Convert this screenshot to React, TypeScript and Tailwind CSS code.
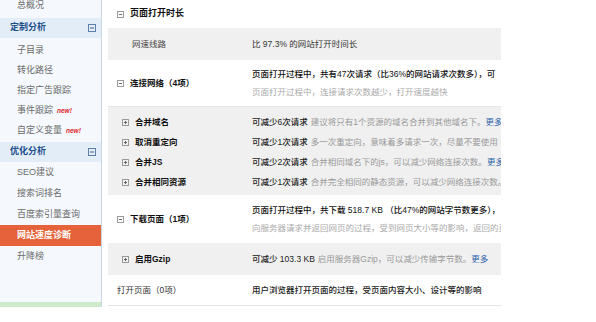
import React from 'react';

const FONT = "font-['Liberation_Sans','Noto_Sans_CJK_SC',sans-serif]";

function Toggle({ open, className = '' }: { open: boolean; className?: string }) {
  return (
    <svg width="7" height="7" viewBox="0 0 7 7" className={`shrink-0 ${className}`}>
      <rect x="0.5" y="0.5" width="6" height="6" fill="none" stroke="#9a9a9a" />
      <line x1="2" y1="3.5" x2="5" y2="3.5" stroke="#666" />
      {!open && <line x1="3.5" y1="2" x2="3.5" y2="5" stroke="#666" />}
    </svg>
  );
}

function SideHeader({ label }: { label: string }) {
  return (
    <div className="h-[20px] bg-[#e3edf8] flex items-center justify-between pl-[10px] pr-[5px]">
      <span className="text-[9px] font-bold text-[#1c4f8c]">{label}</span>
      <svg width="8" height="8" viewBox="0 0 8 8">
        <rect x="0.5" y="0.5" width="7" height="7" fill="none" stroke="#5d7ea6" />
        <line x1="2" y1="4" x2="6" y2="4" stroke="#3c5f8a" />
      </svg>
    </div>
  );
}

function SideItem({ label, isNew, active, h = 'h-[20px]' }: { label: string; isNew?: boolean; active?: boolean; h?: string }) {
  return (
    <div
      className={`${h} flex items-center pl-[17px] text-[9px] ${
        active ? 'bg-[#e5623b] text-white font-bold' : 'text-[#6b6b6b]'
      }`}
    >
      {label}
      {isNew && <span className="ml-[4px] text-[6.5px] italic font-bold text-[#e0262a]">new!</span>}
    </div>
  );
}

function Sidebar() {
  return (
    <aside className="w-[102px] shrink-0 h-[307px] bg-[#f5f9fd] border-r border-[#c9d7e5] flex flex-col overflow-hidden">
      {/* scrolled list: first item half hidden */}
      <div className="h-[18px] overflow-hidden">
        <div className="-mt-[3px] pl-[17px] text-[9px] leading-[16px] text-[#6b6b6b]">总概况</div>
      </div>
      <SideHeader label="定制分析" />
      <div className="pt-[3px]">
        <SideItem label="子目录" />
        <SideItem label="转化路径" />
        <SideItem label="指定广告跟踪" />
        <SideItem label="事件跟踪" isNew />
        <SideItem label="自定义变量" isNew />
      </div>
      <div className="mt-[1px]">
        <SideHeader label="优化分析" />
      </div>
      <div>
        <SideItem label="SEO建议" h="h-[21px]" />
        <SideItem label="搜索词排名" h="h-[21px]" />
        <SideItem label="百度索引量查询" h="h-[21px]" />
        <SideItem label="网站速度诊断" h="h-[21px]" active />
        <SideItem label="升降榜" h="h-[21px]" />
      </div>
      <div className="flex-1" />
      <div className="h-[5px] bg-[#cdebc9]" />
    </aside>
  );
}

const subRows = [
  { name: '合并域名', cut: '可减少6次请求', desc: '建议将只有1个资源的域名合并到其他域名下。', more: '更多' },
  { name: '取消重定向', cut: '可减少1次请求', desc: '多一次重定向，意味着多请求一次，尽量不要使用', more: '' },
  { name: '合并JS', cut: '可减少2次请求', desc: '合并相同域名下的js，可以减少网络连接次数。', more: '更多' },
  { name: '合并相同资源', cut: '可减少1次请求', desc: '合并完全相同的静态资源，可以减少网络连接次数。', more: '' },
];

function Content() {
  return (
    <main className="ml-[6px] w-[393px] h-[307px] overflow-hidden text-[8.5px] whitespace-nowrap">
      {/* 页面打开时长 */}
      <div className="h-[28px] flex items-center pl-[9px] gap-[6px]">
        <Toggle open />
        <span className="font-bold text-[#111] text-[9px]">页面打开时长</span>
      </div>
      <div className="h-[32px] bg-[#f0f0f0] flex items-center">
        <div className="w-[144px] shrink-0 pl-[24px] text-[#444]">网速线路</div>
        <div className="text-[#333]">比 97.3% 的网站打开时间长</div>
      </div>

      {/* 连接网络 */}
      <div className="h-[46px] flex items-center">
        <div className="w-[144px] shrink-0 pl-[9px] flex items-center gap-[6px]">
          <Toggle open />
          <span className="font-bold text-[#111]">连接网络（4项）</span>
        </div>
        <div className="flex flex-col pt-[1px] min-w-0">
          <div className="h-[18px] flex items-center font-medium text-[#111]">页面打开过程中，共有47次请求（比36%的网站请求次数多），可</div>
          <div className="h-[18px] flex items-center text-[#aaa]">页面打开过程中，连接请求次数越少，打开速度越快</div>
        </div>
      </div>
      <div className="bg-[#f0f0f0] border-t border-[#e6e6e6] pt-[5px] pb-[3px]">
        {subRows.map((r) => (
          <div key={r.name} className="h-[20px] flex items-center">
            <div className="w-[144px] shrink-0 pl-[14px] flex items-center gap-[6px]">
              <Toggle open={false} />
              <span className="font-bold text-[#111]">{r.name}</span>
            </div>
            <span className="shrink-0 font-medium text-[#222]">{r.cut}</span>
            <span className="shrink-0 ml-[3px] text-[#999]">{r.desc}</span>
            {r.more && <span className="shrink-0 text-[#2a62a8]">{r.more}</span>}
          </div>
        ))}
      </div>

      {/* 下载页面 */}
      <div className="h-[48px] flex items-center">
        <div className="w-[144px] shrink-0 pl-[9px] flex items-center gap-[6px]">
          <Toggle open />
          <span className="font-bold text-[#111]">下载页面（1项）</span>
        </div>
        <div className="flex flex-col min-w-0">
          <div className="h-[18px] flex items-center font-medium text-[#111]">页面打开过程中，共下载 518.7 KB （比47%的网站字节数更多），</div>
          <div className="h-[18px] flex items-center text-[#aaa]">向服务器请求并返回网页的过程，受到网页大小等的影响，返回的页</div>
        </div>
      </div>
      <div className="h-[32px] bg-[#f0f0f0] flex items-center">
        <div className="w-[144px] shrink-0 pl-[14px] flex items-center gap-[6px]">
          <Toggle open={false} />
          <span className="font-bold text-[#111]">启用Gzip</span>
        </div>
        <span className="shrink-0 font-medium text-[#222]">可减少 103.3 KB</span>
        <span className="shrink-0 ml-[3px] text-[#999]">启用服务器Gzip，可以减少传输字节数。</span>
        <span className="shrink-0 text-[#2a62a8]">更多</span>
      </div>

      {/* 打开页面 */}
      <div className="h-[31px] flex items-center border-b border-[#e4e4e4]">
        <div className="w-[144px] shrink-0 pl-[9px] text-[#333]">打开页面（0项）</div>
        <div className="font-medium text-[#222]">用户浏览器打开页面的过程，受页面内容大小、设计等的影响</div>
      </div>
    </main>
  );
}

export default function App() {
  return (
    <div className={`w-[596px] h-[322px] bg-white flex items-start ${FONT}`}>
      <Sidebar />
      <Content />
    </div>
  );
}
